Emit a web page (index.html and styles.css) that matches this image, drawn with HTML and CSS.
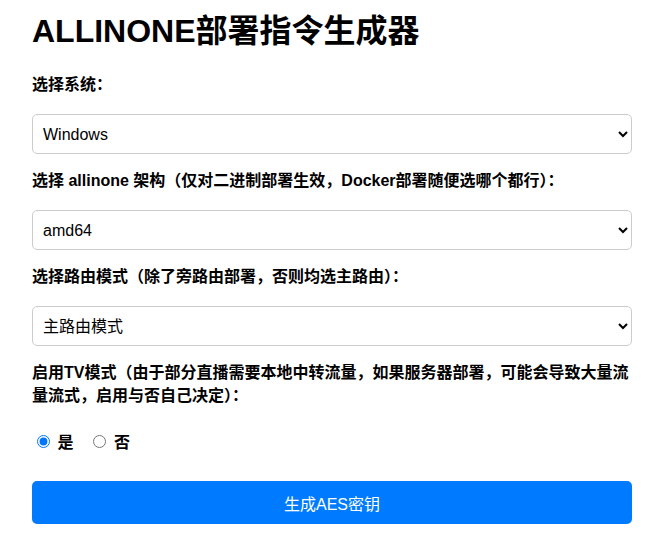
FILE: index.html
```html
<!DOCTYPE html>
<html lang="zh-CN">
<head>
<meta charset="utf-8">
<title>ALLINONE部署指令生成器</title>
<link rel="stylesheet" href="styles.css">
</head>
<body>
<div class="container">
  <h1 class="title">ALLINONE部署指令生成器</h1>
  <div class="group">
    <label class="field-label" for="os">选择系统：</label>
    <select id="os" class="select">
      <option>Windows</option>
      <option>Linux</option>
      <option>macOS</option>
      <option>Docker</option>
    </select>
  </div>
  <div class="group">
    <label class="field-label" for="arch">选择 allinone 架构（仅对二进制部署生效，Docker部署随便选哪个都行）：</label>
    <select id="arch" class="select">
      <option>amd64</option>
      <option>arm64</option>
    </select>
  </div>
  <div class="group">
    <label class="field-label" for="mode">选择路由模式（除了旁路由部署，否则均选主路由）：</label>
    <select id="mode" class="select">
      <option>主路由模式</option>
      <option>旁路由模式</option>
    </select>
  </div>
  <div class="group group-tv">
    <label class="field-label">启用TV模式（由于部分直播需要本地中转流量，如果服务器部署，可能会导致大量流量流式，启用与否自己决定）：</label>
    <div class="radios"><label class="radio-label"><input type="radio" name="tv" checked> 是</label><label class="radio-label"><input type="radio" name="tv"> 否</label></div>
  </div>
  <button class="btn" type="button">生成AES密钥</button>
</div>
</body>
</html>
```

FILE: styles.css
```css
html, body {
  margin: 0;
  padding: 0;
  background: #fff;
}

body {
  font-family: "Liberation Sans", Arial, "Noto Sans CJK SC", sans-serif;
  color: #000;
}

.container {
  width: 600px;
  padding: 13px 0 0 32px;
}

.title {
  font-size: 32px;
  font-weight: bold;
  line-height: 37px;
  margin: 0 0 23px 0;
}

.group {
  margin-bottom: 15px;
}

.field-label {
  display: block;
  font-size: 16px;
  font-weight: bold;
  line-height: 23px;
  margin-bottom: 18px;
}

.select {
  display: block;
  width: 100%;
  height: 40px;
  box-sizing: border-box;
  padding: 0 6px;
  border: 1px solid #ccc;
  border-radius: 5px;
  background: #fff;
  color: #000;
  font-family: "Liberation Sans", Arial, "Noto Sans CJK SC", sans-serif;
  font-size: 16px;
}

.group-tv .field-label {
  margin-bottom: 24px;
}

.group-tv {
  margin-bottom: 27px;
}

.radios {
  font-size: 16px;
  line-height: 23px;
  height: 23px;
}

.radio-label {
  font-weight: bold;
  margin-right: 15px;
}

.btn {
  display: block;
  width: 100%;
  height: 43px;
  border: none;
  border-radius: 5px;
  background: #007bff;
  color: #fff;
  font-family: "Liberation Sans", Arial, "Noto Sans CJK SC", sans-serif;
  font-size: 16px;
  cursor: pointer;
}
```
